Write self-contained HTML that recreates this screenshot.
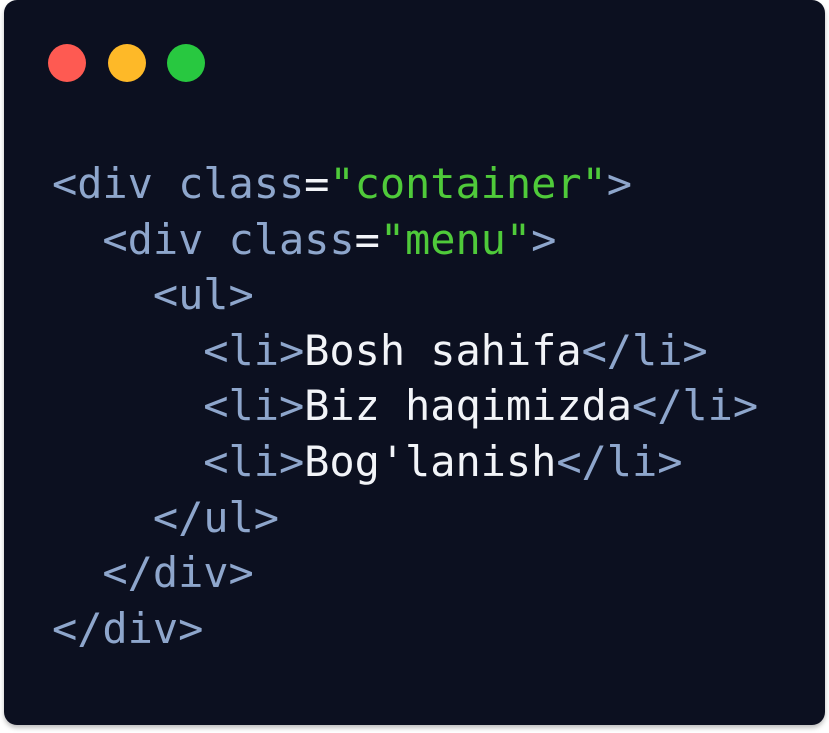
<!DOCTYPE html>
<html><head><meta charset="utf-8"><style>
html,body{margin:0;padding:0;background:#fff;width:829px;height:733px;overflow:hidden}
.card{position:absolute;left:4px;top:0;width:821px;height:725px;background:#0c1020;border-radius:13px;box-shadow:0 3px 5px rgba(0,0,0,0.25)}
.dot{position:absolute;top:44px;width:38px;height:38px;border-radius:50%}
pre{position:absolute;left:52px;top:156px;margin:0;font-family:"DejaVu Sans Mono","Liberation Mono",monospace;font-size:42px;line-height:55.6px;color:#8ea6cc;letter-spacing:-0.07px}
.s{color:#4fca3a}.w{color:#f2f4f8}
</style></head><body>
<div class="card"></div>
<div class="dot" style="left:48px;background:#fe5a52"></div>
<div class="dot" style="left:108px;background:#feb928"></div>
<div class="dot" style="left:167px;background:#28c840"></div>
<pre>&lt;div class<span class="w">=</span><span class="s">"container"</span>&gt;
  &lt;div class<span class="w">=</span><span class="s">"menu"</span>&gt;
    &lt;ul&gt;
      &lt;li&gt;<span class="w">Bosh sahifa</span>&lt;/li&gt;
      &lt;li&gt;<span class="w">Biz haqimizda</span>&lt;/li&gt;
      &lt;li&gt;<span class="w">Bog'lanish</span>&lt;/li&gt;
    &lt;/ul&gt;
  &lt;/div&gt;
&lt;/div&gt;</pre>
</body></html>
